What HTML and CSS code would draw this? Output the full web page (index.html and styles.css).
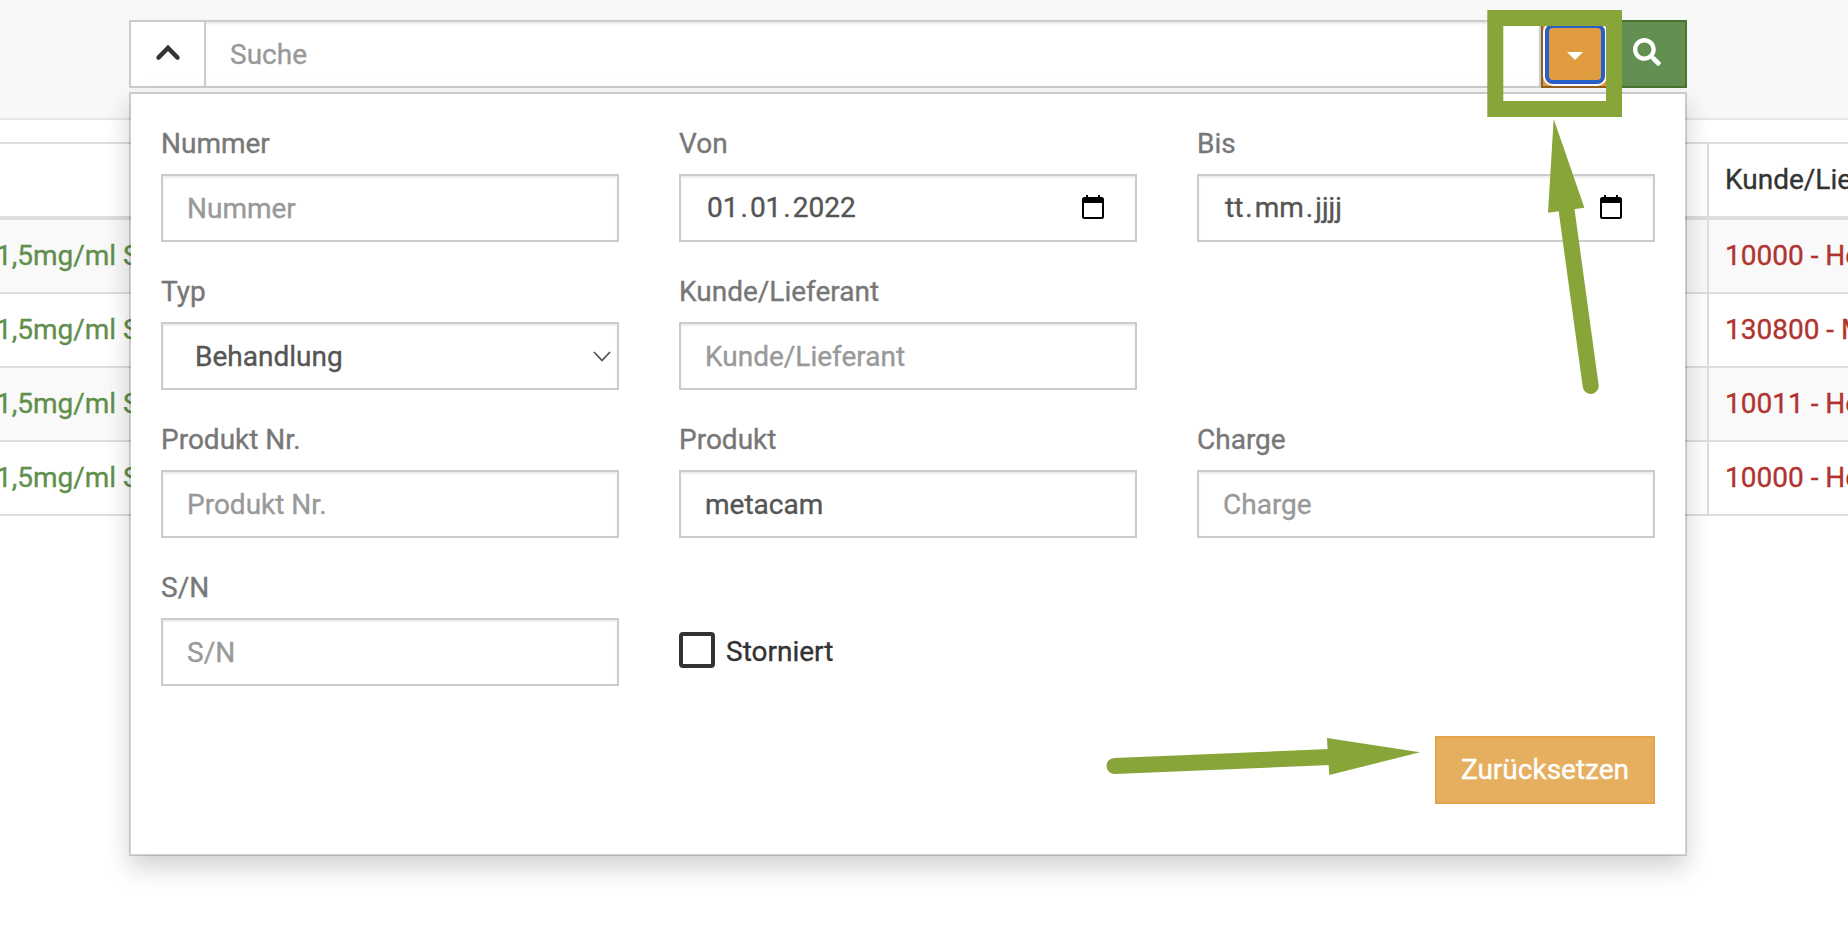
FILE: index.html
```html
<!DOCTYPE html>
<html lang="de">
<head>
<meta charset="utf-8">
<title>Suche</title>
<link rel="stylesheet" href="styles.css">
</head>
<body>
<header class="topbar">
  <div class="search">
    <button class="btn toggle" type="button" aria-label="Einklappen">
      <svg class="chevron-up" viewBox="0 0 26 18"><path d="M3.600 13.500 13 4 22.400 13.500"/></svg>
    </button>
    <input class="control search-input" type="text" placeholder="Suche">
    <button class="btn caret-btn" type="button" aria-label="Filter"><span class="ring"><span class="caret"></span></span></button>
    <button class="btn submit" type="button" aria-label="Suchen">
      <svg class="magnifier" viewBox="0 0 512 512"><path d="M505 442.700 405.300 343c-4.500-4.500-10.600-7-17-7H372c27.600-35.300 44-79.700 44-128C416 93.100 322.900 0 208 0S0 93.100 0 208s93.100 208 208 208c48.300 0 92.700-16.400 128-44v16.300c0 6.400 2.500 12.500 7 17l99.700 99.700c9.400 9.400 24.600 9.400 33.900 0l28.300-28.300c9.400-9.400 9.400-24.600.1-34zM208 336c-70.700 0-128-57.200-128-128 0-70.700 57.200-128 128-128 70.700 0 128 57.200 128 128 0 70.700-57.200 128-128 128z"/></svg>
    </button>
    <form class="panel">
      <div class="fields">
        <label class="field"><span class="label">Nummer</span><input class="control" type="text" placeholder="Nummer"></label>
        <div class="field"><span class="label">Von</span>
          <div class="control date"><span class="date-text"><span>01</span>.<span>01</span>.<span>2022</span></span>
            <svg class="calendar" viewBox="0 0 22 24"><path fill-rule="evenodd" d="M4 0h2v2h10V0h2v2h1.500A2.500 2.500 0 0 1 22 4.500v17a2.500 2.500 0 0 1-2.500 2.500h-17A2.500 2.500 0 0 1 0 21.500v-17A2.500 2.500 0 0 1 2.500 2H4zM2 8v14h18V8z"/></svg>
          </div>
        </div>
        <div class="field"><span class="label">Bis</span>
          <div class="control date"><span class="date-text"><span>tt</span>.<span>mm</span>.<span>jjjj</span></span>
            <svg class="calendar" viewBox="0 0 22 24"><path fill-rule="evenodd" d="M4 0h2v2h10V0h2v2h1.500A2.500 2.500 0 0 1 22 4.500v17a2.500 2.500 0 0 1-2.500 2.500h-17A2.500 2.500 0 0 1 0 21.500v-17A2.500 2.500 0 0 1 2.500 2H4zM2 8v14h18V8z"/></svg>
          </div>
        </div>
        <div class="field"><span class="label">Typ</span>
          <div class="control select"><span class="value">Behandlung</span>
            <svg class="chevron-down" viewBox="0 0 18 11"><path d="M1 1 9 9.500 17 1"/></svg>
          </div>
        </div>
        <label class="field"><span class="label">Kunde/Lieferant</span><input class="control" type="text" placeholder="Kunde/Lieferant"></label>
        <div></div>
        <label class="field"><span class="label">Produkt Nr.</span><input class="control" type="text" placeholder="Produkt Nr."></label>
        <label class="field"><span class="label">Produkt</span><input class="control" type="text" value="metacam"></label>
        <label class="field"><span class="label">Charge</span><input class="control" type="text" placeholder="Charge"></label>
        <label class="field"><span class="label">S/N</span><input class="control" type="text" placeholder="S/N"></label>
        <div class="check"><span class="box"></span><span>Storniert</span></div>
      </div>
      <div class="actions"><button class="btn reset" type="button">Zurücksetzen</button></div>
    </form>
  </div>
</header>
<main class="list">
  <div class="row head"><div class="cell product"></div><div class="cell customer">Kunde/Lie</div></div>
  <div class="row odd"><div class="cell product">1,5mg/ml S</div><div class="cell customer">10000 - Ho</div></div>
  <div class="row"><div class="cell product">1,5mg/ml S</div><div class="cell customer">130800 - M</div></div>
  <div class="row odd"><div class="cell product">1,5mg/ml S</div><div class="cell customer">10011 - Ho</div></div>
  <div class="row"><div class="cell product">1,5mg/ml S</div><div class="cell customer">10000 - Ho</div></div>
</main>
<svg class="markers" viewBox="0 0 1848 930">
  <rect x="1495.300" y="18" width="118.700" height="91"/>
  <path class="shaft" d="M1566 206 1590.700 386M1114.500 766 1330 757"/>
  <path class="tip" d="M1553.700 119 1584.400 207.700 1548 212.700zM1420 752.300 1326.900 738 1329.300 775z"/>
</svg>
</body>
</html>
```
FILE: styles.css
```css
* { box-sizing: border-box; }
body {
  margin: 0;
  height: 930px;
  overflow: hidden;
  position: relative;
  background: #fff;
  color: #333;
  font: 28px/40px Roboto, "Liberation Sans", sans-serif;
  -webkit-text-stroke: .35px;
}
.topbar {
  height: 120px;
  padding: 20px 161px 0 129px;
  background: #f8f8f8;
  border-bottom: 2px solid #e7e7e7;
}
.search { position: relative; display: flex; height: 68px; }
.btn {
  display: flex;
  align-items: center;
  justify-content: center;
  height: 68px;
  margin: 0;
  padding: 0;
  border: 2px solid #ccc;
  background: #fff;
  color: #fff;
  font: inherit;
}
.toggle { width: 75px; border-right: 0; }
.chevron-up { width: 26px; height: 18px; margin: -2px 0 0 0; fill: none; stroke: #333; stroke-width: 4.6; stroke-linecap: round; }
.control {
  display: block;
  width: 100%;
  height: 68px;
  padding: 12px 24px;
  border: 2px solid #ccc;
  border-radius: 0;
  background: #fff;
  box-shadow: inset 0 2px 2px rgba(0, 0, 0, .075);
  color: #555;
  font: inherit;
}
.control::placeholder { color: #999; opacity: 1; }
.search-input { flex: 1; width: auto; }
.caret-btn { width: 68px; background: #e09c3f; border-color: #935f21; }
.ring {
  flex: none;
  display: flex;
  align-items: center;
  justify-content: center;
  width: 60px;
  height: 60px;
  border: 4px solid #2860c8;
  border-radius: 8px;
  box-shadow: 0 0 0 2px #fff;
}
.caret { border: 8px solid transparent; border-top-color: #fff; border-bottom: 0; margin-top: 4px; }
.submit { width: 78px; background: #638f53; border-color: #48752f; }
.magnifier { width: 28px; height: 28px; fill: #fff; margin: -4px 0 0 -2px; }
.panel {
  position: absolute;
  z-index: 2;
  top: 72px;
  left: 0;
  width: 1558px;
  height: 764px;
  padding: 30px;
  border: 2px solid rgba(0, 0, 0, .17);
  background: #fff;
  background-clip: padding-box;
  box-shadow: 0 12px 24px rgba(0, 0, 0, .175);
}
.fields { display: grid; grid-template-columns: repeat(3, 458px); gap: 30px 60px; }
.field { display: block; }
.label { display: block; height: 40px; margin-bottom: 10px; color: #777; }
.date { display: flex; justify-content: space-between; align-items: center; padding-right: 31px; }
.date-text span { padding: 0 2px; }
.calendar { width: 22px; height: 24px; fill: #000; margin-top: -2px; }
.select { display: flex; justify-content: space-between; align-items: center; padding: 0 6px 0 32px; }
.value { margin-top: 1px; }
.chevron-down { width: 18px; height: 11px; fill: none; stroke: #555; stroke-width: 1.8; }
.check { display: flex; align-items: center; align-self: end; gap: 11px; height: 68px; }
.box { width: 36px; height: 36px; border: 4px solid #333; border-radius: 4px; margin-top: -4px; }
.actions { display: flex; justify-content: flex-end; padding-top: 50px; }
.reset { width: 220px; background: #e6af5f; border-color: #e3a44c; }
.list { margin-top: 22px; border-top: 2px solid #ddd; }
.row { display: flex; height: 74px; border-bottom: 2px solid #ddd; }
.head { height: 76px; border-bottom-width: 4px; }
.odd { background: #f9f9f9; }
.cell { padding: 16px 0; white-space: nowrap; overflow: hidden; }
.product { width: 1707px; color: #5f8f4b; text-indent: -4px; }
.customer { flex: 1; padding-left: 16px; border-left: 2px solid #ddd; color: #b03330; }
.head .customer { color: #333; }
.markers { position: absolute; z-index: 3; inset: 0; width: 1848px; height: 930px; pointer-events: none; fill: none; stroke: #88a53a; stroke-width: 16; }
.shaft { stroke-linecap: round; }
.tip { fill: #88a53a; stroke: none; }
```
